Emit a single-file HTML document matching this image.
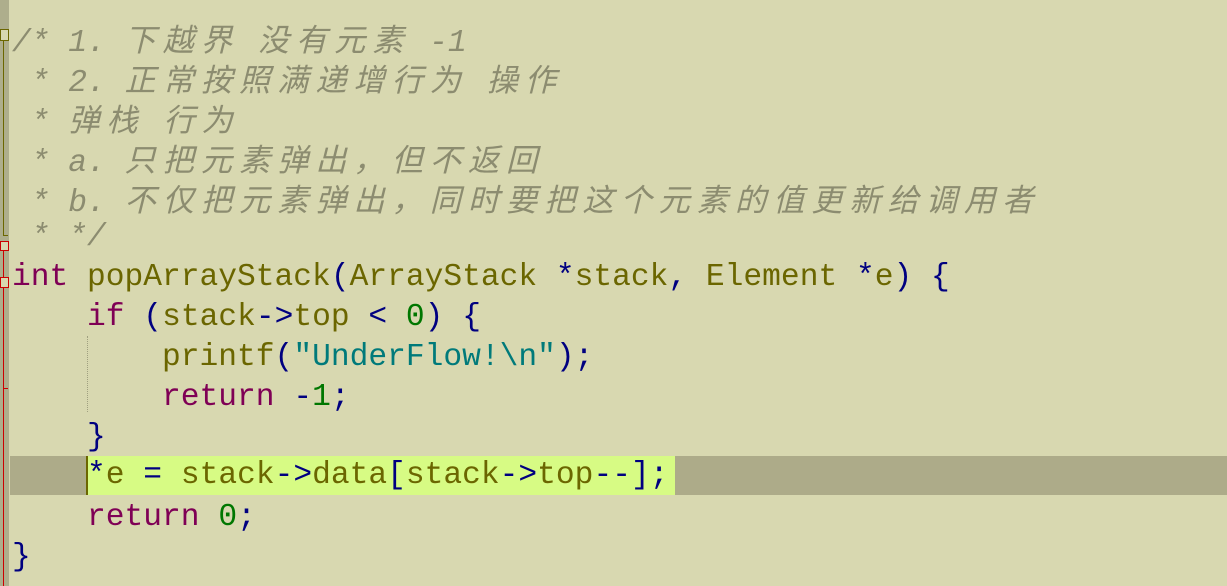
<!DOCTYPE html>
<html><head><meta charset="utf-8"><style>
body{margin:0;width:1227px;height:586px;background:#d8d8b0;overflow:hidden;position:relative}
.g{position:absolute;left:0;top:0;width:9px;height:586px;background:#aeae8c}
.l{position:absolute;left:12px;height:40px;line-height:44px;font-family:"Liberation Mono",monospace;font-size:31.25px;white-space:pre;color:#6b6600}
.cm{color:#8c8c70;font-style:italic}
.z{font-family:"Noto Sans CJK SC",sans-serif;letter-spacing:6.9px}
.k{color:#7f0055}.p{color:#000080}.n{color:#007700}.s{color:#007a7a}
.hl{position:absolute;left:10px;top:456px;width:1217px;height:39px;background:#adab89}
.sel{position:absolute;left:86px;top:456px;width:589px;height:39px;background:#d7fb84;border-left:2px solid #6b6600;box-sizing:border-box}
</style></head><body>
<div class="g"></div>
<div style="position:absolute;left:3px;top:40px;width:4px;height:195px;border-left:1px solid #6b6600;border-bottom:1px solid #6b6600"></div>
<div style="position:absolute;left:3px;top:250px;width:1px;height:336px;background:#cc0000"></div>
<div style="position:absolute;left:0;top:29px;width:7px;height:10px;border:1px solid #6b6600;background:#d8d8b0"></div>
<div style="position:absolute;left:0;top:241px;width:7px;height:8px;border:1px solid #cc0000;background:#d8d8b0"></div>
<div style="position:absolute;left:0;top:277px;width:7px;height:9px;border:1px solid #cc0000;background:#d8d8b0"></div>
<div style="position:absolute;left:3px;top:388px;width:5px;height:1px;background:#cc0000"></div>
<div style="position:absolute;left:87px;top:336px;height:76px;border-left:1px dotted #a0a080"></div>
<div class="hl"></div><div class="sel"></div>
<div class="l cm" style="top:16px">/* 1. <span class="z">下越界</span> <span class="z">没有元素</span> -1</div>
<div class="l cm" style="top:56px"> * 2. <span class="z">正常按照满递增行为</span> <span class="z">操作</span></div>
<div class="l cm" style="top:96px"> * <span class="z">弹栈</span> <span class="z">行为</span></div>
<div class="l cm" style="top:136px"> * a. <span class="z">只把元素弹出，但不返回</span></div>
<div class="l cm" style="top:176px"> * b. <span class="z">不仅把元素弹出，同时要把这个元素的值更新给调用者</span></div>
<div class="l cm" style="top:216px"> * */</div>
<div class="l" style="top:256px"><span class="k">int</span> popArrayStack<span class="p">(</span>ArrayStack <span class="p">*</span>stack<span class="p">,</span> Element <span class="p">*</span>e<span class="p">)</span> <span class="p">{</span></div>
<div class="l" style="top:296px">    <span class="k">if</span> <span class="p">(</span>stack<span class="p">-&gt;</span>top <span class="p">&lt;</span> <span class="n">0</span><span class="p">)</span> <span class="p">{</span></div>
<div class="l" style="top:336px">        printf<span class="p">(</span><span class="s">"UnderFlow!\n"</span><span class="p">);</span></div>
<div class="l" style="top:376px">        <span class="k">return</span> <span class="p">-</span><span class="n">1</span><span class="p">;</span></div>
<div class="l" style="top:416px">    <span class="p">}</span></div>
<div class="l" style="top:454px">    <span class="p">*</span>e <span class="p">=</span> stack<span class="p">-&gt;</span>data<span class="p">[</span>stack<span class="p">-&gt;</span>top<span class="p">--];</span></div>
<div class="l" style="top:496px">    <span class="k">return</span> <span class="n">0</span><span class="p">;</span></div>
<div class="l" style="top:536px"><span class="p">}</span></div>
</body></html>
